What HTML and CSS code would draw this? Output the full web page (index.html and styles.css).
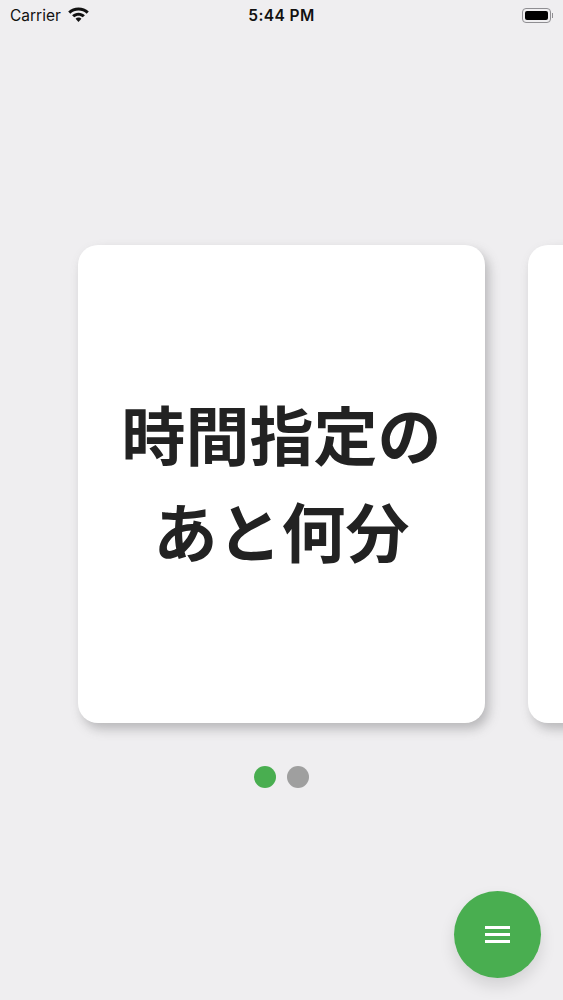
FILE: index.html
```html
<!DOCTYPE html>
<html lang="ja">
<head>
<meta charset="utf-8">
<title>時間指定のあと何分</title>
<link rel="stylesheet" href="styles.css">
</head>
<body>
<div class="screen">
  <header class="status">
    <div class="status-left">
      <span>Carrier</span>
      <svg class="wifi" viewBox="0 0 20 15" width="21" height="16" aria-hidden="true">
        <path d="M10 1.200c-3.700 0-7.200 1.400-9.800 3.900l2 2.100c2.100-2 4.900-3.100 7.800-3.100s5.700 1.100 7.800 3.100l2-2.100C17.200 2.600 13.700 1.200 10 1.200z"/>
        <path d="M10 6.200c-2.300 0-4.500.9-6.100 2.400l2 2.100c1.100-1 2.600-1.600 4.100-1.600s3 .6 4.100 1.600l2-2.100C14.500 7.100 12.300 6.200 10 6.200z"/>
        <path d="M10 10.900c-1.100 0-2.100.4-2.800 1.100L10 15l2.800-3c-.7-.7-1.700-1.100-2.800-1.100z"/>
      </svg>
    </div>
    <div class="status-time">5:44 PM</div>
    <div class="status-right">
      <span class="battery"><span class="battery-fill"></span></span>
      <span class="battery-cap"></span>
    </div>
  </header>
  <main class="carousel">
    <div class="track">
      <section class="card card-main"><p class="card-text">時間指定の<br>あと何分</p></section>
      <section class="card card-next"></section>
    </div>
    <div class="dots">
      <span class="dot dot-active"></span>
      <span class="dot"></span>
    </div>
  </main>
  <button class="fab" aria-label="メニュー">
    <span class="bar"></span><span class="bar"></span><span class="bar"></span>
  </button>
</div>
</body>
</html>
```
FILE: styles.css
```css
* { box-sizing: border-box; }
html, body { margin: 0; padding: 0; }
body { background: #efeef0; font-family: "Inter", "Liberation Sans", "Noto Sans CJK JP", sans-serif; }
.screen { position: relative; width: 563px; height: 1000px; overflow: hidden; background: #efeef0; }
.status { display: flex; align-items: center; justify-content: space-between; height: 30px; padding: 0 10px; color: #111; font-size: 15.5px; }
.status-left { display: flex; align-items: center; gap: 7px; width: 130px; }
.wifi { fill: #111; margin-top: -2px; }
.status-time { font-size: 15.5px; font-weight: 600; letter-spacing: 0.4px; }
.status-right { display: flex; align-items: center; justify-content: flex-end; gap: 1px; width: 130px; }
.battery { display: block; width: 29px; height: 15px; padding: 2px; border: 1px solid #8f8e92; border-radius: 4px; }
.battery-fill { display: block; width: 100%; height: 100%; background: #000; border-radius: 2px; }
.battery-cap { display: block; width: 1px; height: 5px; background: #8f8e92; }
.carousel { display: flex; flex-direction: column; padding-top: 215px; }
.track { display: flex; gap: 43px; padding-left: 78px; width: 1000px; }
.card { flex: none; height: 478px; background: #fff; border-radius: 20px; box-shadow: 4px 6px 11px rgba(90, 88, 92, 0.36); }
.card-main { width: 407px; display: flex; align-items: center; justify-content: center; padding-bottom: 6px; }
.card-next { width: 407px; }
.card-text { margin: 0; font-family: "Noto Sans CJK JP", sans-serif; font-weight: 700; font-size: 64px; line-height: 97px; text-align: center; color: #222; }
.dots { display: flex; justify-content: center; gap: 11px; margin-top: 43px; }
.dot { width: 22px; height: 22px; border-radius: 50%; background: #9f9f9f; }
.dot-active { background: #49ae50; }
.fab { position: absolute; left: 454px; top: 891px; width: 87px; height: 87px; padding: 0; border: 0; border-radius: 50%; background: #49ae50; display: flex; flex-direction: column; align-items: center; justify-content: center; gap: 4px; box-shadow: 0 8px 16px rgba(0, 0, 0, 0.12); }
.bar { display: block; width: 25px; height: 2.7px; background: #fff; }
```
